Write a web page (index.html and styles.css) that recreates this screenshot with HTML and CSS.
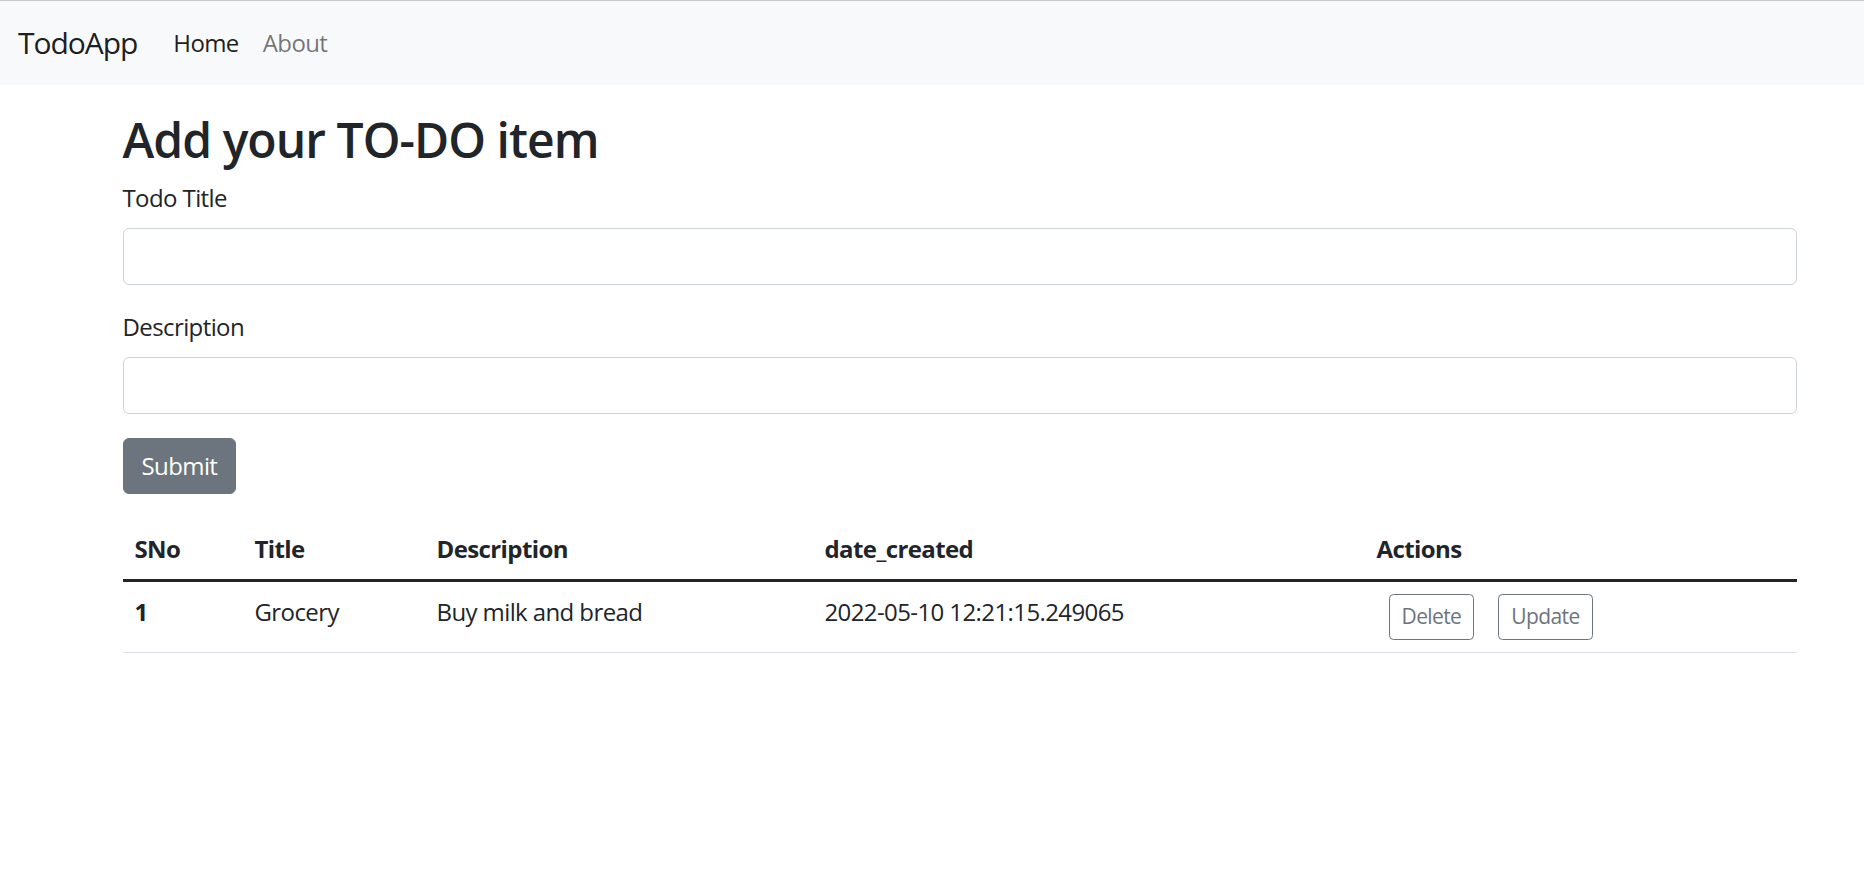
FILE: index.html
```html
<!DOCTYPE html>
<html lang="en">
<head>
<meta charset="utf-8">
<title>TodoApp</title>
<link rel="stylesheet" href="styles.css">
</head>
<body>
<nav class="navbar">
  <a class="brand" href="#">TodoApp</a>
  <ul class="nav">
    <li><a class="nav-link active" href="#">Home</a></li>
    <li><a class="nav-link" href="#">About</a></li>
  </ul>
</nav>
<main class="container">
  <h2 class="heading">Add your TO-DO item</h2>
  <form class="form">
    <div class="field">
      <label class="form-label" for="title">Todo Title</label>
      <input class="form-control" type="text" id="title">
    </div>
    <div class="field">
      <label class="form-label" for="desc">Description</label>
      <input class="form-control" type="text" id="desc">
    </div>
    <button type="button" class="btn btn-secondary">Submit</button>
  </form>
  <table class="table">
    <colgroup>
      <col class="c1"><col class="c2"><col class="c3"><col class="c4"><col class="c5">
    </colgroup>
    <thead>
      <tr><th>SNo</th><th>Title</th><th>Description</th><th>date_created</th><th>Actions</th></tr>
    </thead>
    <tbody>
      <tr>
        <th>1</th>
        <td>Grocery</td>
        <td>Buy milk and bread</td>
        <td>2022-05-10 12:21:15.249065</td>
        <td><button type="button" class="btn-sm">Delete</button><button type="button" class="btn-sm">Update</button></td>
      </tr>
    </tbody>
  </table>
</main>
</body>
</html>
```
FILE: styles.css
```css
* { box-sizing: border-box; }
html, body { margin: 0; padding: 0; }
body {
  font-family: "Open Sans", "Noto Sans", sans-serif;
  font-size: 24px;
  line-height: 1.5;
  letter-spacing: -0.025em;
  color: #212529;
  background: #fff;
  border-top: 1px solid #c9c9c9;
}
a { text-decoration: none; }
.navbar {
  background: #f8f9fa;
  display: flex;
  align-items: center;
  padding: 12px 18px;
  height: 83.5px;
}
.brand {
  font-size: 30px;
  line-height: 45px;
  letter-spacing: -0.035em;
  color: rgba(0,0,0,.9);
  margin-right: 24px;
  padding: 7px 0;
}
.nav {
  display: flex;
  list-style: none;
  margin: 0;
  padding: 0;
}
.nav-link {
  display: block;
  padding: 12px;
  color: rgba(0,0,0,.55);
}
.nav-link.active { color: rgba(0,0,0,.9); }
.container {
  width: 1710px;
  margin: 26px 0 24px 104.5px;
  padding: 0 18px;
}
.heading {
  font-size: 48px;
  font-weight: 600;
  letter-spacing: -0.02em;
  line-height: 1.2;
  margin: 0 0 12px;
}
.field { margin-bottom: 24px; }
.form-label {
  display: inline-block;
  margin-bottom: 12px;
}
.form-control {
  display: block;
  width: 100%;
  height: 57px;
  border: 1.5px solid #ced4da;
  border-radius: 6px;
  font: inherit;
  padding: 9px 18px;
  background: #fff;
}
.btn {
  font: inherit;
  letter-spacing: inherit;
  border-radius: 6px;
  padding: 9px 18px;
  border: 1.5px solid transparent;
  cursor: pointer;
}
.btn-secondary {
  background: #6c757d;
  border-color: #6c757d;
  color: #fff;
}
.table {
  width: 100%;
  border-collapse: collapse;
  margin-top: 25px;
  table-layout: fixed;
}
.c1 { width: 120px; }
.c2 { width: 182px; }
.c3 { width: 388px; }
.c4 { width: 552px; }
.table th, .table td {
  text-align: left;
  vertical-align: top;
  padding: 12px;
  border-bottom: 1.5px solid #dee2e6;
  font-weight: normal;
}
.table th { font-weight: 700; }
.table thead th { border-bottom: none; }
.table tbody tr:first-child > * { border-top: 3px solid #212529; }
.btn-sm {
  font: inherit;
  letter-spacing: inherit;
  font-size: 21px;
  line-height: 1.5;
  padding: 6px 12px;
  margin: 0 12px;
  color: #6c757d;
  background: transparent;
  border: 1.5px solid #6c757d;
  border-radius: 4.5px;
}
```
